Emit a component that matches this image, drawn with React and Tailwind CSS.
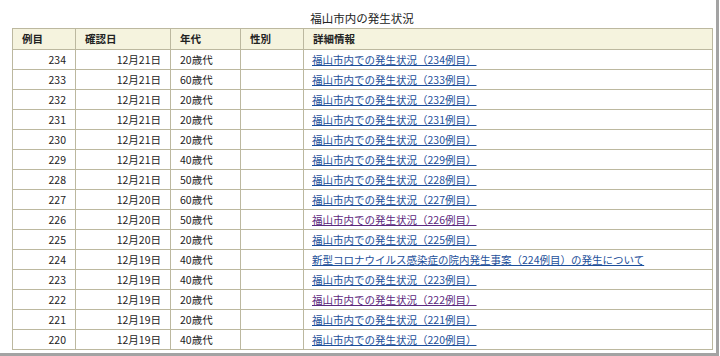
const rows = [
  ["234", "12月21日", "20歳代"],
  ["233", "12月21日", "60歳代"],
  ["232", "12月21日", "20歳代"],
  ["231", "12月21日", "20歳代"],
  ["230", "12月21日", "20歳代"],
  ["229", "12月21日", "40歳代"],
  ["228", "12月21日", "50歳代"],
  ["227", "12月20日", "60歳代"],
  ["226", "12月20日", "50歳代", true],
  ["225", "12月20日", "20歳代"],
  ["224", "12月19日", "40歳代", false, "新型コロナウイルス感染症の院内発生事案（224例目）の発生について"],
  ["223", "12月19日", "40歳代"],
  ["222", "12月19日", "20歳代", true],
  ["221", "12月19日", "20歳代"],
  ["220", "12月19日", "40歳代"],
];

export default function App() {
  return (
    <div
      className="w-[720px] h-[356px] bg-white overflow-hidden"
      style={{ fontFamily: '"Noto Sans CJK JP", "Noto Sans", sans-serif' }}
    >
      <div className="w-[719px] h-[356px] border-r-[3px] border-b-[3px] border-[#a3a3a3] bg-white pt-[9px] pl-[12px]">
        <div className="w-[700px] text-center text-[11.5px] leading-[19px] text-[#222]">
          福山市内の発生状況
        </div>
        <table className="w-[701px] border-collapse table-fixed text-[10.5px] text-[#222]">
          <colgroup>
            <col className="w-[63px]" />
            <col className="w-[95px]" />
            <col className="w-[70px]" />
            <col className="w-[63px]" />
            <col />
          </colgroup>
          <thead>
            <tr className="h-[21px] bg-[#f5f3de]">
              {["例目", "確認日", "年代", "性別", "詳細情報"].map((h) => (
                <th
                  key={h}
                  className="border border-[#bcb89f] px-[9px] text-left font-bold leading-[18px]"
                >
                  {h}
                </th>
              ))}
            </tr>
          </thead>
          <tbody>
            {rows.map(([n, d, a, visited, title]) => (
              <tr key={n} className="h-[20px]">
                <td className="border border-[#bcb89f] px-[9px] text-right leading-[17px]">{n}</td>
                <td className="border border-[#bcb89f] px-[9px] text-right leading-[17px]">{d}</td>
                <td className="border border-[#bcb89f] px-[9px] leading-[17px]">{a}</td>
                <td className="border border-[#bcb89f] px-[9px] leading-[17px]"></td>
                <td className="border border-[#bcb89f] px-[8px] leading-[17px]">
                  <a
                    href="#"
                    className={
                      "underline whitespace-nowrap " +
                      (visited ? "text-[#5b2a7e]" : "text-[#1d4f9a]")
                    }
                  >
                    {title || `福山市内での発生状況（${n}例目）`}
                  </a>
                </td>
              </tr>
            ))}
          </tbody>
        </table>
      </div>
    </div>
  );
}
